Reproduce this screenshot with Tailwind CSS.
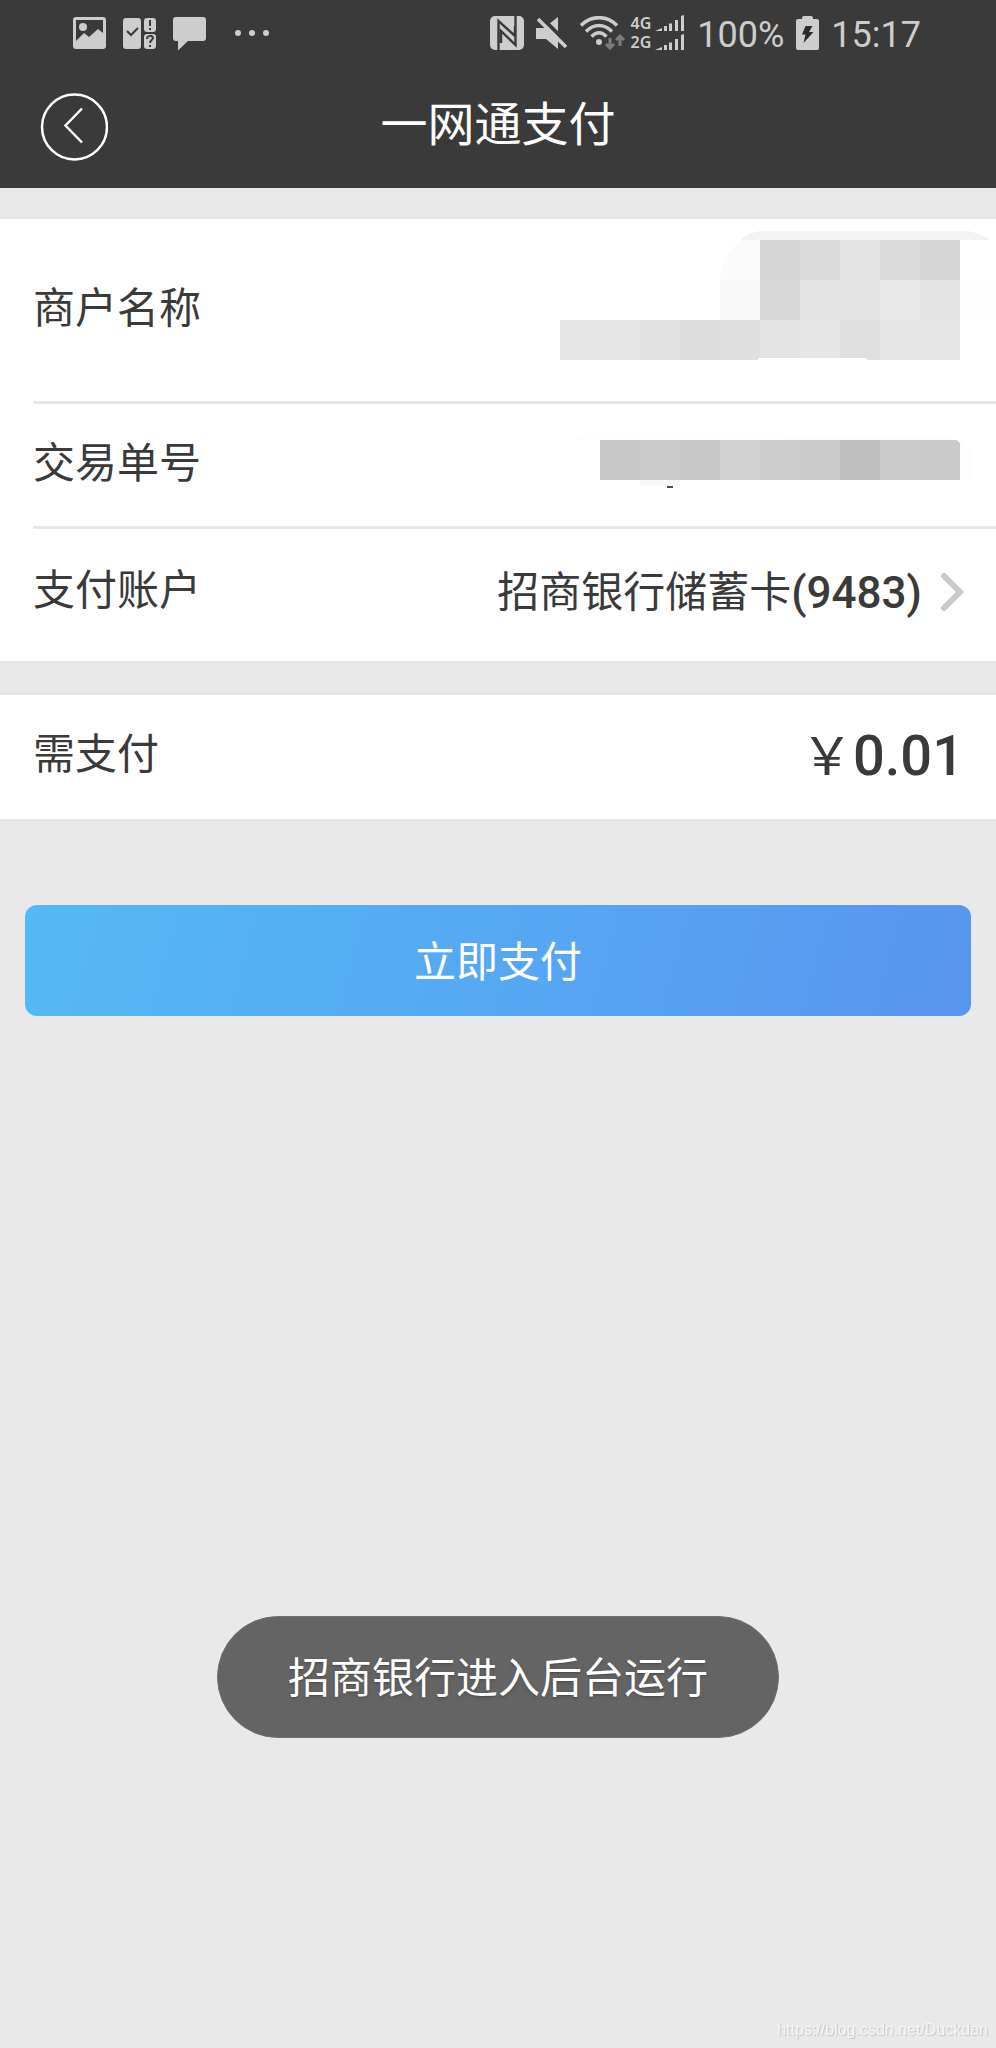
<!DOCTYPE html>
<html lang="zh-CN">

<head>
    <meta charset="UTF-8">
    <meta name="viewport" content="width=device-width, initial-scale=1.0">
    <title>一网通支付</title>
    <script src="https://cdn.jsdelivr.net/npm/@tailwindcss/browser@4"></script>
</head>

<body class="min-h-screen bg-[#e9e9e9] font-[Roboto,'Noto_Sans_CJK_SC',sans-serif] text-[#3a3a3a]">
    <header class="bg-[#3a3a3a] text-white">
        <!-- status bar -->
        <div class="flex h-[66px] items-center justify-between pl-[73px] pr-[75px] text-[#cdcdcd]">
            <div class="flex items-center gap-4">
                <svg class="h-[34px] w-[34px]" viewBox="0 0 34 34" fill="currentColor">
                    <path fill-rule="evenodd" d="M3 1h27a3 3 0 0 1 3 3v26a3 3 0 0 1-3 3H3a3 3 0 0 1-3-3V4a3 3 0 0 1 3-3zM3 4v21l8-8 5 4 9-8 5 4V4z" />
                    <circle cx="10" cy="11" r="4" />
                </svg>
                <svg class="h-[34px] w-[34px]" viewBox="0 0 34 34">
                    <rect x="0" y="2" width="18" height="31" rx="3" fill="#cdcdcd" />
                    <rect x="21" y="2" width="12" height="14" rx="3" fill="#cdcdcd" />
                    <rect x="21" y="18" width="12" height="15" rx="3" fill="#cdcdcd" />
                    <path d="M4 15l4 4 7-7M27 4v6M27 12v2" fill="none" stroke="#3a3a3a" stroke-width="2" />
                    <path d="M24 23c0-4 6-4 6-1 0 2-3 2-3 5M27 29v2" fill="none" stroke="#3a3a3a" stroke-width="2" />
                </svg>
                <svg class="h-[34px] w-[34px]" viewBox="0 0 34 34" fill="currentColor">
                    <path d="M3 1h27a3 3 0 0 1 3 3v18a3 3 0 0 1-3 3H15L5 34.500V25H3a3 3 0 0 1-3-3V4a3 3 0 0 1 3-3z" />
                </svg>
                <svg class="ml-3 h-[34px] w-[34px]" viewBox="0 0 34 34" fill="currentColor">
                    <circle cx="3" cy="17" r="3" />
                    <circle cx="17" cy="17" r="3" />
                    <circle cx="31" cy="17" r="3" />
                </svg>
            </div>
            <div class="flex items-center gap-3">
                <svg class="h-[34px] w-[34px]" viewBox="0 0 34 34">
                    <rect width="34" height="34" rx="5" fill="#cdcdcd" />
                    <path d="M8.500 34V5L25 20V10M25.500 0V29L11 15V27" fill="none" stroke="#3a3a3a" stroke-width="2.400" />
                </svg>
                <svg class="h-[34px] w-[32px]" viewBox="0 0 32 34">
                    <path d="M0 12h8L22 1v32l-12-10H0z" fill="#cdcdcd" />
                    <path d="M4 0l30 30" stroke="#3a3a3a" stroke-width="4" />
                    <path d="M2 3l28 28" stroke="#cdcdcd" stroke-width="3.500" />
                </svg>
                <svg class="h-[34px] w-[46px]" viewBox="0 0 46 34" fill="none" stroke="#cdcdcd" stroke-width="3.500">
                    <path d="M1 9.500C11-1 27-1 37 9.500M6 15.500c8-8 18-8 26 0M11.500 20.500c5-5 10-5 15 0" />
                    <circle cx="19" cy="26" r="3" fill="#cdcdcd" stroke="none" />
                    <path d="M30 22v9M26 28l4 4 4-4M40 30v-9M36 24l4-4 4 4" stroke="#7b7b7b" stroke-width="3" />
                </svg>
                <div class="-ml-2 flex flex-col">
                    <div class="flex h-[19px] items-center gap-1">
                        <span class="font-['Noto_Sans'] text-[16px] font-semibold leading-[19px]">4G</span>
                        <svg class="h-[17px] w-[30px]" viewBox="0 0 30 17" fill="currentColor">
                            <path d="M0 16l7-3v3zM9 11h3v5H9zM14 8.500h3V16h-3zM20 5h3v11h-3zM26 1l3-1v16h-3z" />
                        </svg>
                    </div>
                    <div class="flex h-[19px] items-center gap-1">
                        <span class="font-['Noto_Sans'] text-[16px] font-semibold leading-[19px]">2G</span>
                        <svg class="h-[17px] w-[30px]" viewBox="0 0 30 17" fill="currentColor">
                            <path d="M0 16l7-3v3zM9 11h3v5H9zM14 8.500h3V16h-3zM20 5h3v11h-3zM26 1l3-1v16h-3z" />
                        </svg>
                    </div>
                </div>
                <span class="pt-1 text-[36px] leading-none">100%</span>
                <svg class="h-[34px] w-[23px]" viewBox="0 0 23 34">
                    <path d="M6 3V2a2 2 0 0 1 2-2h7a2 2 0 0 1 2 2v1h4a2 2 0 0 1 2 2v27a2 2 0 0 1-2 2H2a2 2 0 0 1-2-2V5a2 2 0 0 1 2-2z" fill="#cdcdcd" />
                    <path d="M9.500 10h7L13 16h4.500L7.500 27l2-8.500H6z" fill="#2b2b2b" />
                </svg>
                <span class="pt-1 text-[36px] leading-none">15:17</span>
            </div>
        </div>

        <!-- title bar -->
        <nav class="flex h-[122px] items-center justify-between px-10">
            <button type="button" aria-label="返回">
                <svg class="h-[68px] w-[68px]" viewBox="0 0 68 68" fill="none" stroke="#fff">
                    <circle cx="34.500" cy="34" r="32.500" stroke-width="2.500" />
                    <path d="M42 15.500L25.500 32.500L42 49.500" stroke-width="2.500" />
                </svg>
            </button>
            <h1 class="pb-1 text-[47px] leading-[68px]">一网通支付</h1>
            <span class="w-[68px]"></span>
        </nav>
    </header>

    <main class="text-[42px]">
        <section class="mt-7 border-y-3 border-[#e5e5ea] bg-white pl-[33px]">
            <div class="flex h-[185px] items-start justify-between border-b-3 border-[#e5e5ea]">
                <span class="pt-[60px] leading-[60px]">商户名称</span>
                <!-- masked merchant name -->
                <svg class="mt-3 h-[130px] w-[456px]" viewBox="0 0 456 130" shape-rendering="crispEdges">
                    <path d="M200 9Q211 0 224 0H428Q440 2 450 9z" fill="#f3f3f6" />
                    <path d="M180 49Q183 20 202 9H220V49z" fill="#fbfbfb" />
                    <path d="M180 49h40v40h-40z" fill="#f8f8f8" />
                    <path d="M220 9h40v40h-40z" fill="#d6d6d6" />
                    <path d="M260 9h40v40h-40z" fill="#dadada" />
                    <path d="M300 9h40v40h-40z" fill="#e3e3e3" />
                    <path d="M340 9h40v40h-40z" fill="#dadada" />
                    <path d="M380 9h40v40h-40z" fill="#d5d5d5" />
                    <path d="M220 49h40v40h-40z" fill="#d8d8d8" />
                    <path d="M260 49h80v40h-80z" fill="#e3e3e3" />
                    <path d="M340 49h40v40h-40z" fill="#e9e9e9" />
                    <path d="M380 49h40v40h-40z" fill="#e3e3e3" />
                    <path d="M420 49h36v40h-36z" fill="#fdfdfd" />
                    <path d="M20 89h80v40h-80z" fill="#e5e5e5" />
                    <path d="M100 89h40v40h-40z" fill="#e1e1e1" />
                    <path d="M140 89h40v40h-40z" fill="#dcdcdc" />
                    <path d="M180 89h40v38h-2v2h-38z" fill="#dfdfdf" />
                    <path d="M220 89h40v38h-40z" fill="#e3e3e3" />
                    <path d="M260 89h40v38h-40z" fill="#e6e6e6" />
                    <path d="M300 89h40v40h-12l-3-2h-25z" fill="#e0e0e0" />
                    <path d="M340 89h80v40h-80z" fill="#e5e5e5" />
                </svg>
            </div>
            <div class="flex h-[125px] items-start justify-between border-b-3 border-[#e5e5ea]">
                <span class="pt-[30px] leading-[60px]">交易单号</span>
                <!-- masked order number -->
                <svg class="mt-7 h-[60px] w-[420px]" viewBox="0 0 420 60" shape-rendering="crispEdges">
                    <path d="M0 8Q8 1 20 1H204Q210 4 220 4H364Q376 6 380 8z" fill="#fdfdfd" />
                    <path d="M384 8Q400 20 398 40L394 48H384z" fill="#fdfdfd" />
                    <path d="M24 8h40v40h-40z" fill="#c8c8c8" />
                    <path d="M64 8h40v40h-40z" fill="#cbcbcb" />
                    <path d="M104 8h40v40h-40z" fill="#c8c8c8" />
                    <path d="M144 8h40v40h-40z" fill="#d2d2d2" />
                    <path d="M184 8h40v40h-40z" fill="#cdcdcd" />
                    <path d="M224 8h40v40h-40z" fill="#cbcbcb" />
                    <path d="M264 8h40v40h-40z" fill="#bfbfbf" />
                    <path d="M304 8h40v40h-40z" fill="#cbcbcb" />
                    <path d="M344 8h36l4 3v37h-40z" fill="#c9c9c9" />
                    <path d="M64 48h40v6h-40z" fill="#f9f9f9" />
                    <path d="M91 54h6v2h-6z" fill="#4a4a4a" />
                </svg>
            </div>
            <div class="flex h-[132px] items-center justify-between pb-1 pr-8">
                <span class="pb-1 leading-[60px]">支付账户</span>
                <button type="button" class="flex items-center">
                    <span class="leading-[60px]">招商银行储蓄卡</span>
                    <span class="text-[44px] font-medium leading-[60px]">(9483)</span>
                    <svg class="ml-4 h-[42px] w-[26px]" viewBox="0 0 26 42" fill="none" stroke="#c9c9c9" stroke-width="6" stroke-linecap="round">
                        <path d="M6 4l16 16L6 36" />
                    </svg>
                </button>
            </div>
        </section>

        <section class="mt-7 flex h-[130px] items-center justify-between border-y-3 border-[#e5e5ea] bg-white pl-[33px] pr-8">
            <span class="pb-1 leading-[60px]">需支付</span>
            <span class="flex items-baseline">
                <span class="text-[52px] leading-[60px]">￥</span>
                <span class="text-[56px] font-medium leading-[60px]">0.01</span>
            </span>
        </section>

        <div class="mt-[83px] px-[25px]">
            <button type="button" class="h-[111px] w-full rounded-xl bg-linear-[105deg] from-[#55b9f3] via-[#56a8f3] to-[#5895ef] pt-1 leading-[60px] text-white">立即支付</button>
        </div>
    </main>

    <div role="status" class="fixed bottom-[310px] left-1/2 -translate-x-1/2 whitespace-nowrap rounded-full border border-[#707070] bg-[#646464] px-[70px] pb-7 pt-8 text-[42px] leading-[60px] text-white text-shadow-md">招商银行进入后台运行</div>

    <footer class="fixed bottom-2 right-2 font-['Liberation_Sans'] text-[16px] leading-5 text-[#f5f5f5] [text-shadow:1px_1px_1px_#c4c4c4]">https://blog.csdn.net/Duckdan</footer>
</body>

</html>
